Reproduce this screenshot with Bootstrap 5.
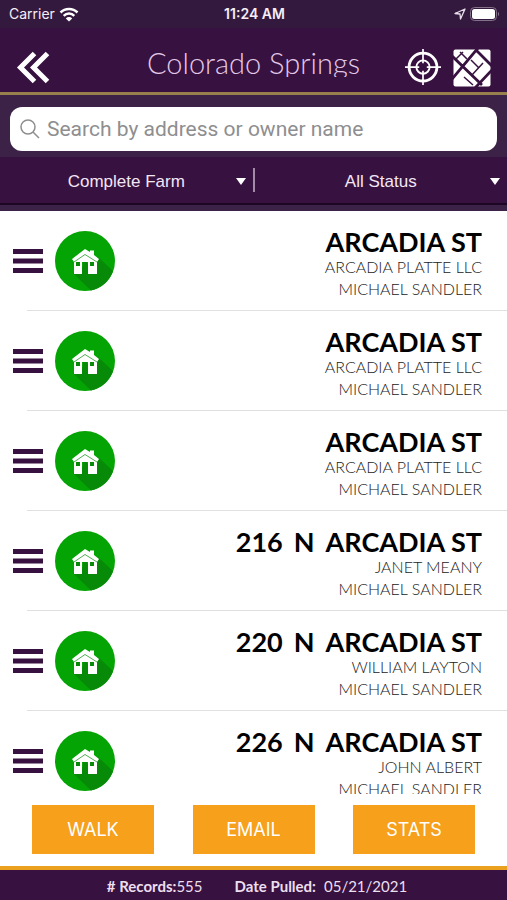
<!DOCTYPE html>
<html lang="en">
<head>
<meta charset="utf-8">
<meta name="viewport" content="width=device-width, initial-scale=1">
<title>Colorado Springs</title>
<link href="https://cdn.jsdelivr.net/npm/bootstrap@5.3.0/dist/css/bootstrap.min.css" rel="stylesheet">
<style>
  body { font-family: "Lato", sans-serif; color: #000; background: #fff; }
  svg { display: block; flex: none; }
  .status-bar { display: grid; grid-template-columns: 1fr auto 1fr; height: 28px; padding: 0 7px 0 9px; background: #34193f; color: #f4eef6; font: 14px/28px "Inter", sans-serif; }
  .app-bar { display: grid; grid-template-columns: 1fr auto 1fr; height: 67px; padding: 0 16px; background: #37113f; border-bottom: 3px solid #98804e; }
  .app-title { margin: 0; height: 29px; overflow: hidden; font-size: 29px; line-height: 30px; font-weight: 300; color: #e3c9e8; }
  .icon-btn { padding: 0; border: 0; background: none; color: #fff; }
  .search-band { padding: 12px 10px 6px; background: #3c2247; }
  .search-box { height: 44px; border-radius: 12px; padding: 0 10px; gap: 7px; background: #fff; }
  .search-box input { font: 21px/28px "Roboto", sans-serif; color: #333; outline: 0; }
  .search-box input::placeholder { color: #8e8e90; opacity: 1; }
  .filter-bar { height: 46px; background: #37113f; }
  .filter-item { position: relative; flex: 1 1 0; }
  .filter-item select { width: 100%; height: 46px; padding: 3px 0 0; border: 0; appearance: none; background: none; color: #f3e6f6; font: 17px/24px "Liberation Sans", sans-serif; text-align: center; text-align-last: center; }
  .filter-item option { color: #000; }
  .filter-item svg { position: absolute; right: 7px; top: 21px; pointer-events: none; }
  .filter-split { width: 2px; height: 24px; background: #a48ca9; }
  .filter-edge { height: 8px; border-top: 2px solid #1d0524; background: #3c2247; }
  .record-list { flex: 1 1 0; min-height: 0; overflow: hidden; }
  .record { height: 100px; padding: 0 25px 0 13px; position: relative; }
  .record::after { content: ""; position: absolute; left: 27px; right: 0; bottom: 0; height: 1px; background: #e0e0e2; }
  .record-text { padding-top: 6px; }
  .record-street { display: flex; justify-content: flex-end; gap: 11px; margin: 0; font-size: 27px; line-height: 28px; font-weight: 700; }
  .record-name { font-size: 16px; line-height: 22px; font-weight: 300; color: #222; }
  .action-row { padding: 11px 32px 12px; }
  .action-btn { width: 122px; height: 49px; padding: 0; border: 0; border-radius: 0; background: #f6a01b; color: #fff; font: 400 18px/24px "Inter", sans-serif; }
  .info-bar { height: 34px; padding-left: 7px; border-top: 4px solid #eba11d; background: #37113f; color: #ecdff0; font-size: 15px; line-height: 32px; white-space: pre; }
</style>
</head>
<body>
<svg width="0" height="0" class="position-absolute" aria-hidden="true">
  <symbol id="house" viewBox="0 0 60 60">
    <circle cx="30" cy="30" r="30" fill="#04a404"/>
    <path d="M43 26 58 40A30 30 0 0 1 36 59.500L18 42Z" fill="#078a07"/>
    <path d="M19 29 30 21 42 29V43H33V31H27V43H19Z" fill="#fff"/>
    <path d="M30 18 35 21V19.500H39V24L44 28 42 31 30 23 19 31 17 28Z" fill="#fff"/>
    <path d="M19 31 30 23.500 42 31" fill="none" stroke="#058d05" stroke-width=".7"/>
    <path d="M21 31h4v4h-4zM35 31h4v4h-4z" fill="#078a07"/>
    <path d="M28 31h4v12h-4z" fill="#078a07"/>
  </symbol>
  <symbol id="bars" viewBox="0 0 30 25"><path d="M0 0h30v5H0zM0 9.500h30v5H0zM0 19h30v5H0z" fill="#37113f"/></symbol>
</svg>
<div class="d-flex flex-column vh-100">
  <div class="status-bar">
    <div class="d-flex align-items-center gap-1"><span>Carrier</span>
      <svg width="20" height="15" viewBox="0 0 20 15" fill="none" stroke="#fff" stroke-width="2.500"><path d="M1.500 5.500a12 12 0 0 1 17 0M4.700 8.800a7.500 7.500 0 0 1 10.600 0"/><path d="M10 14.500 6.800 11.400a4.500 4.500 0 0 1 6.400 0Z" fill="#fff" stroke="none"/></svg>
    </div>
    <div class="fw-semibold">11:24 AM</div>
    <div class="d-flex align-items-center justify-content-end gap-1">
      <svg width="12" height="12" viewBox="0 0 12 12" fill="none" stroke="#e8dfeb" stroke-width="1.300" stroke-linejoin="round"><path d="M11 1 1 5.500 6 6 6.500 11Z"/></svg>
      <svg width="30" height="14" viewBox="0 0 30 14"><rect x=".5" y=".5" width="26" height="13" rx="4" fill="none" stroke="#84718b"/><rect x="2" y="2" width="23" height="10" rx="2.500" fill="#fff"/><path d="M28 5v4a2.300 2.300 0 0 0 0-4" fill="#84718b"/></svg>
    </div>
  </div>
  <header class="app-bar">
    <div class="d-flex align-items-center pt-3"><button class="icon-btn" type="button" aria-label="Back">
      <svg width="34" height="34" viewBox="0 0 34 34" fill="none" stroke="#fff" stroke-width="5"><path d="M18.500 2.500 4.500 16.500 18.500 30.500M31.500 2.500 17.500 16.500 31.500 30.500"/></svg></button></div>
    <div class="pt-3 mt-1"><h1 class="app-title">Colorado Springs</h1></div>
    <div class="d-flex align-items-center justify-content-end gap-2 pt-3">
      <button class="icon-btn me-1" type="button" aria-label="Locate me">
        <svg width="36" height="38" viewBox="0 0 38 38" fill="none" stroke="#fff"><circle cx="19" cy="18" r="14.700" stroke-width="3"/><circle cx="19" cy="18" r="7" stroke-width="2"/><path d="M19-1v15M19 22v15M0 18h15M23 18h15" stroke-width="1.800"/></svg></button>
      <button class="icon-btn" type="button" aria-label="Map">
        <svg width="38" height="38" viewBox="0 0 38 38"><rect x=".5" y=".5" width="37" height="37" rx="2" fill="#fff"/><g fill="none" stroke="#37113f"><path d="M-1 7 29 36M-1 30 25-1M22 39 39 21M23 1 39 17" stroke-width="2.800"/><path d="M7 3 14 10M2 11 10 3M18 11 26 19M19 26 30 14M11 28 20 36" stroke-width="1.500"/></g></svg></button>
    </div>
  </header>
  <div class="search-band">
    <label class="search-box d-flex align-items-center">
      <svg width="20" height="20" viewBox="0 0 20 20" fill="none" stroke="#8e8e90" stroke-width="1.500"><circle cx="8" cy="8" r="7"/><path d="M13 13 19 19"/></svg>
      <input class="border-0 bg-transparent p-0 flex-grow-1" type="search" aria-label="Search" placeholder="Search by address or owner name">
    </label>
  </div>
  <div class="filter-bar d-flex align-items-center">
    <div class="filter-item"><select aria-label="Farm"><option>Complete Farm</option></select><svg width="10" height="7" viewBox="0 0 10 7"><path d="M0 0h10L5 7Z" fill="#fff"/></svg></div>
    <div class="filter-split"></div>
    <div class="filter-item"><select aria-label="Status"><option>All Status</option></select><svg width="10" height="7" viewBox="0 0 10 7"><path d="M0 0h10L5 7Z" fill="#fff"/></svg></div>
  </div>
  <div class="filter-edge"></div>
  <main class="record-list">
    <div class="record d-flex align-items-center"><svg width="30" height="25"><use href="#bars"/></svg><svg class="ms-2 me-auto" width="68" height="60"><use href="#house"/></svg><div class="record-text text-end"><h2 class="record-street">ARCADIA ST</h2><div class="record-name">ARCADIA PLATTE LLC</div><div class="record-name">MICHAEL SANDLER</div></div></div>
    <div class="record d-flex align-items-center"><svg width="30" height="25"><use href="#bars"/></svg><svg class="ms-2 me-auto" width="68" height="60"><use href="#house"/></svg><div class="record-text text-end"><h2 class="record-street">ARCADIA ST</h2><div class="record-name">ARCADIA PLATTE LLC</div><div class="record-name">MICHAEL SANDLER</div></div></div>
    <div class="record d-flex align-items-center"><svg width="30" height="25"><use href="#bars"/></svg><svg class="ms-2 me-auto" width="68" height="60"><use href="#house"/></svg><div class="record-text text-end"><h2 class="record-street">ARCADIA ST</h2><div class="record-name">ARCADIA PLATTE LLC</div><div class="record-name">MICHAEL SANDLER</div></div></div>
    <div class="record d-flex align-items-center"><svg width="30" height="25"><use href="#bars"/></svg><svg class="ms-2 me-auto" width="68" height="60"><use href="#house"/></svg><div class="record-text text-end"><h2 class="record-street"><span>216</span> <span>N</span> <span>ARCADIA ST</span></h2><div class="record-name">JANET MEANY</div><div class="record-name">MICHAEL SANDLER</div></div></div>
    <div class="record d-flex align-items-center"><svg width="30" height="25"><use href="#bars"/></svg><svg class="ms-2 me-auto" width="68" height="60"><use href="#house"/></svg><div class="record-text text-end"><h2 class="record-street"><span>220</span> <span>N</span> <span>ARCADIA ST</span></h2><div class="record-name">WILLIAM LAYTON</div><div class="record-name">MICHAEL SANDLER</div></div></div>
    <div class="record d-flex align-items-center"><svg width="30" height="25"><use href="#bars"/></svg><svg class="ms-2 me-auto" width="68" height="60"><use href="#house"/></svg><div class="record-text text-end"><h2 class="record-street"><span>226</span> <span>N</span> <span>ARCADIA ST</span></h2><div class="record-name">JOHN ALBERT</div><div class="record-name">MICHAEL SANDLER</div></div></div>
  </main>
  <div class="action-row d-flex justify-content-between">
    <button class="action-btn" type="button">WALK</button>
    <button class="action-btn" type="button">EMAIL</button>
    <button class="action-btn" type="button">STATS</button>
  </div>
  <footer class="info-bar d-flex justify-content-center"><b># Records:</b><span>555</span><b class="ms-4 ps-2">Date Pulled:</b><span class="ms-2">05/21/2021</span></footer>
</div>
<script src="https://cdn.jsdelivr.net/npm/bootstrap@5.3.0/dist/js/bootstrap.bundle.min.js"></script>
</body>
</html>
